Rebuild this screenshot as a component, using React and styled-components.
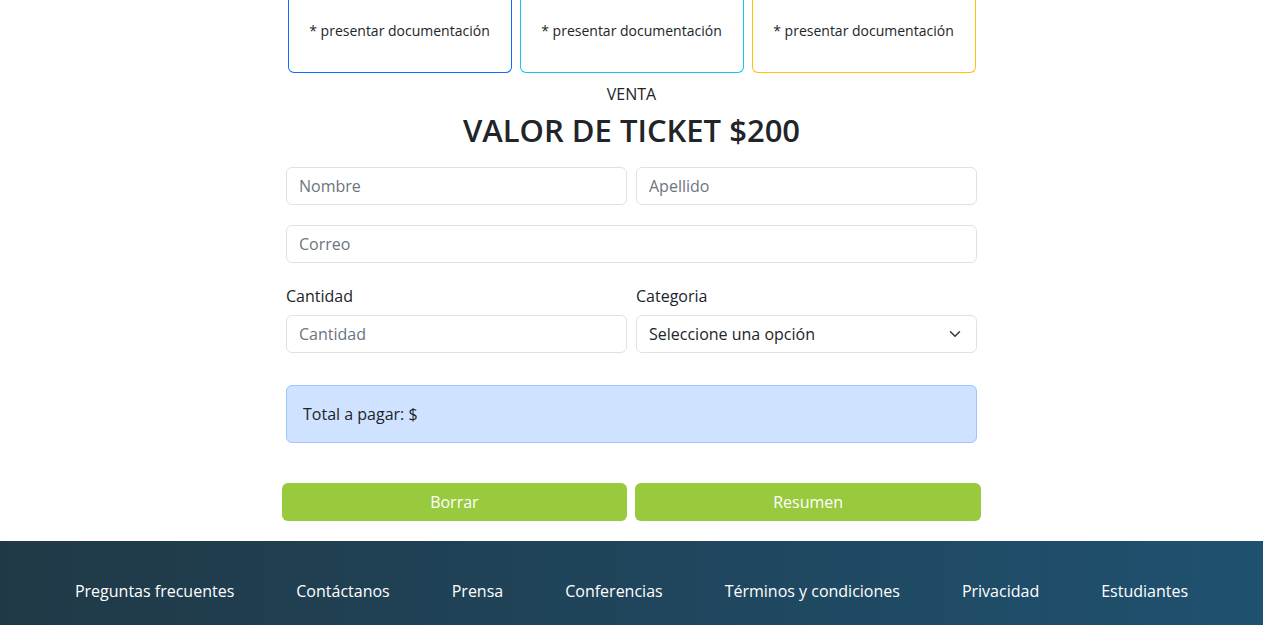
import React from 'react';
import styled, { createGlobalStyle } from 'styled-components';

const GlobalStyle = createGlobalStyle`
    body {
        margin: 0;
        font-family: 'Open Sans', 'Noto Sans', sans-serif;
        color: #212529;
        background: #fff;
    }
    * { box-sizing: border-box; }
`;

const cards = [
    { color: '#0d6efd' },
    { color: '#0dcaf0' },
    { color: '#ffc107' },
];

const footerLinks = [
    'Preguntas frecuentes',
    'Contáctanos',
    'Prensa',
    'Conferencias',
    'Términos y condiciones',
    'Privacidad',
    'Estudiantes',
];

const App = () => {
    return (
        <>
            <GlobalStyle />
            <Main>
                <CardRow>
                    {cards.map((c, i) => (
                        <Card key={i} $color={c.color}>* presentar documentación</Card>
                    ))}
                </CardRow>
                <Overline>VENTA</Overline>
                <Title>VALOR DE TICKET $200</Title>
                <Form>
                    <Row>
                        <Input placeholder="Nombre" />
                        <Input placeholder="Apellido" />
                    </Row>
                    <Row $single>
                        <Input placeholder="Correo" />
                    </Row>
                    <Row>
                        <Field>
                            <Label>Cantidad</Label>
                            <Input placeholder="Cantidad" />
                        </Field>
                        <Field>
                            <Label>Categoria</Label>
                            <SelectBox>
                                Seleccione una opción
                                <svg width="12" height="12" viewBox="0 0 16 16" fill="none">
                                    <path d="M2 5l6 6 6-6" stroke="#343a40" strokeWidth="2" strokeLinecap="round" strokeLinejoin="round" />
                                </svg>
                            </SelectBox>
                        </Field>
                    </Row>
                    <Alert>Total a pagar: $</Alert>
                    <ButtonRow>
                        <Button>Borrar</Button>
                        <Button>Resumen</Button>
                    </ButtonRow>
                </Form>
            </Main>
            <Footer>
                {footerLinks.map(l => (
                    <FooterLink key={l} href="#">{l}</FooterLink>
                ))}
            </Footer>
        </>
    );
};

export default App;

const Main = styled.main`
    display: flex;
    flex-direction: column;
    align-items: center;
`;

const CardRow = styled.div`
    display: grid;
    grid-template-columns: repeat(3, 224px);
    gap: 8px;
`;

const Card = styled.div`
    height: 73px;
    border: 1px solid ${p => p.$color};
    border-top: none;
    border-radius: 0 0 6px 6px;
    display: flex;
    justify-content: center;
    padding-top: 20px;
    font-size: 14px;
    line-height: 21px;
`;

const Overline = styled.div`
    margin-top: 9px;
    font-size: 16px;
    line-height: 24px;
`;

const Title = styled.h2`
    margin: 5px 0 0;
    font-size: 31px;
    font-weight: 600;
    line-height: 38.4px;
`;

const Form = styled.form`
    width: 691px;
    margin-top: 18px;
    display: flex;
    flex-direction: column;
`;

const Row = styled.div`
    display: grid;
    grid-template-columns: ${p => (p.$single ? '1fr' : '1fr 1fr')};
    gap: 9px;
    margin-bottom: ${p => (p.$single ? '21px' : '20px')};
`;

const Field = styled.div`
    display: flex;
    flex-direction: column;
`;

const Label = styled.label`
    font-size: 16px;
    line-height: 24px;
    margin-bottom: 7px;
`;

const Input = styled.input`
    height: 38px;
    width: 100%;
    padding: 6px 12px;
    font: inherit;
    font-size: 16px;
    color: #212529;
    border: 1px solid #dee2e6;
    border-radius: 6px;
    outline: none;
    &::placeholder {
        color: #6c757d;
    }
`;

const SelectBox = styled.div`
    height: 38px;
    padding: 6px 15px 6px 12px;
    font-size: 16px;
    line-height: 24px;
    border: 1px solid #dee2e6;
    border-radius: 6px;
    display: flex;
    align-items: center;
    justify-content: space-between;
`;

const Alert = styled.div`
    margin-top: 12px;
    padding: 16px;
    font-size: 16px;
    line-height: 24px;
    background: #cfe2ff;
    border: 1px solid #9ec5fe;
    border-radius: 6px;
    color: #212529;
`;

const ButtonRow = styled.div`
    margin: 40px -4px 20px -4.5px;
    display: grid;
    grid-template-columns: 1fr 1fr;
    gap: 8px;
`;

const Button = styled.button`
    height: 38px;
    border: none;
    border-radius: 6px;
    background: #99c93d;
    color: #fff;
    font: inherit;
    font-size: 16px;
    cursor: pointer;
`;

const Footer = styled.footer`
    height: 100px;
    background: linear-gradient(90deg, #203947 0%, #1f5170 100%);
    display: flex;
    align-items: center;
    justify-content: center;
    gap: 62px;
`;

const FooterLink = styled.a`
    color: #fff;
    text-decoration: none;
    font-size: 16px;
    line-height: 24px;
`;
